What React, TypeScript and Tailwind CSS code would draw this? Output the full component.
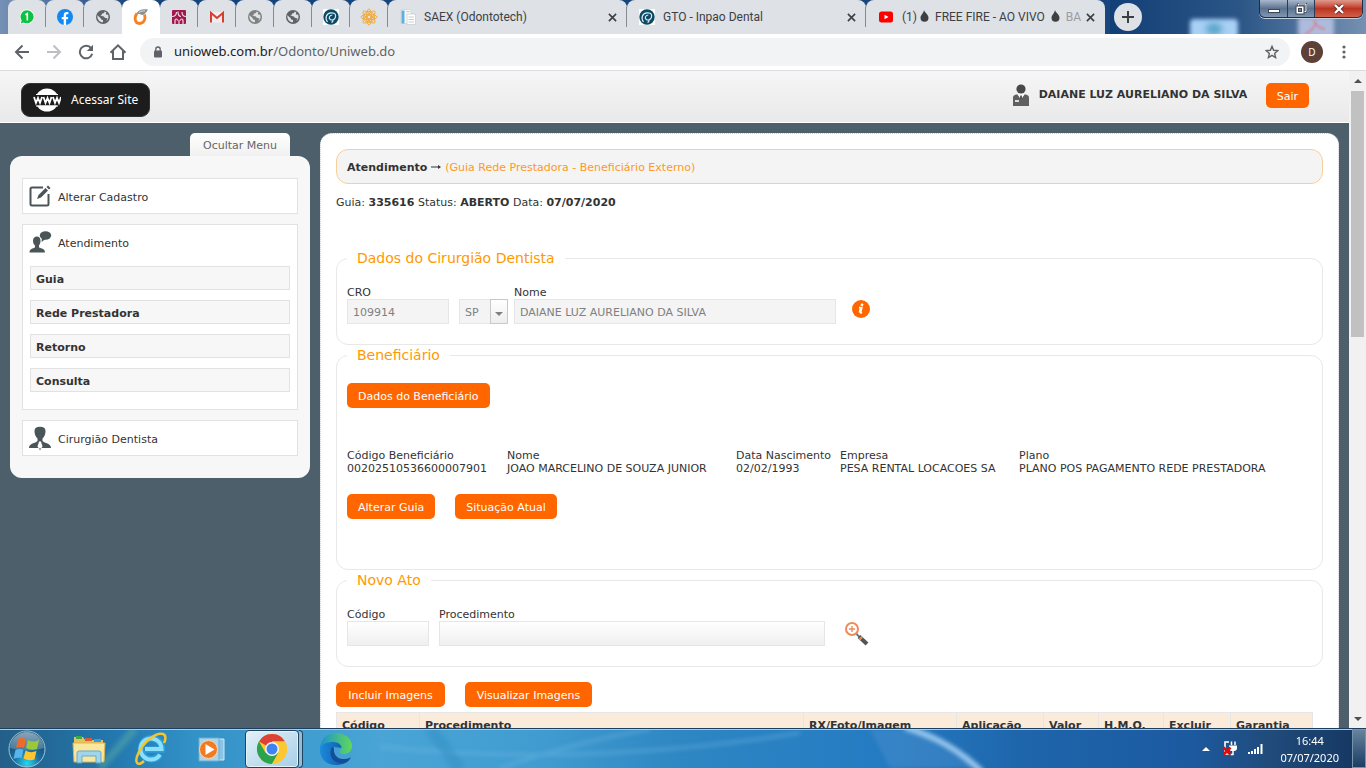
import type { ReactNode } from "react";

const ui = "font-['Noto_Sans',sans-serif]";

function Globe({ tone = "#5f6368" }: { tone?: string }) {
  return (
    <svg width="16" height="16" viewBox="0 0 16 16">
      <circle cx="8" cy="8" r="7" fill={tone} />
      <path d="M2.3 6.2 L5.5 9 L6.3 10.6 L8 11 V13.2 C5 13.4 2.2 11 2.3 6.2Z M9.5 2.6 C9.5 4 8.5 4.6 7 4.4 L6.5 6.2 L5 6.6 L8.8 7.4 L9.8 8.8 L12.6 9.4 L11.2 12.2 C13.6 10.4 14 7.6 13 5.4 L11.5 5.8 L10.8 4.8 L11.4 3.4Z" fill="#dee1e6" />
    </svg>
  );
}

function WhatsApp() {
  return (
    <svg width="16" height="16" viewBox="0 0 16 16">
      <path d="M8.2 0.5a7.3 7.3 0 1 1-3.5 13.8L.6 15.6l1.3-4A7.3 7.3 0 0 1 8.2.5Z" fill="#fff" />
      <path d="M8.2 1.3a6.5 6.5 0 1 1-3.4 12.1L1.7 14.500l1-3A6.500 6.500 0 0 1 8.200 1.300Z" fill="#0dc143" />
      <path d="M6.4 5.7 8.300 4.700V11.500" fill="none" stroke="#fff" strokeWidth="1.600" />
    </svg>
  );
}

function Facebook() {
  return (
    <svg width="16" height="16" viewBox="0 0 16 16">
      <circle cx="8" cy="8" r="8" fill="#1188f2" />
      <path d="M6.7 16V10.300H4.700V8H6.700V6.300C6.700 4.200 7.900 3.100 9.700 3.100c.9 0 1.700.1 1.700.1v2h-1c-1 0-1.300.6-1.300 1.200V8h2.200l-.4 2.300H9.100V16Z" fill="#fff" />
    </svg>
  );
}

function OrangeRing() {
  return (
    <svg width="16" height="18" viewBox="0 0 16 18">
      <path d="M4 5.500C1 9 1.500 15.500 6.500 15.500c4.500 0 6.500-4.500 5-9" fill="none" stroke="#f58220" strokeWidth="2.800" />
      <path d="M3 6C5 2 9 .5 15 1.500c-1 2-2 3-3.500 4.500C9 8.500 7 5 3 6Z" fill="#8f8f8f" />
      <path d="M6 4.500c2-1.500 4-1.700 6-1.600" stroke="#e4e4e4" fill="none" />
    </svg>
  );
}

function Crimson() {
  return (
    <svg width="16" height="16" viewBox="0 0 16 16">
      <rect x="1" y="1" width="14" height="14" rx="1" fill="#a3174f" />
      <g stroke="#ecd9e2" fill="none" strokeWidth="1.200">
        <path d="M1 7.500C4 7.500 5.500 6 5.500 3M7 2.500C7 5 8 7.500 10 7.500M11 3c0 2.500 1 4.500 4 4.500" />
        <path d="M4 15v-3.500c0-2 2.500-2 2.500 0M9.500 11.500c0-2 2.500-2 2.500 0V15M8 11v4" />
      </g>
    </svg>
  );
}

function Gmail() {
  return (
    <svg width="16" height="16" viewBox="0 0 16 16">
      <path d="M1 3h14v10.500H1Z" fill="#f2eded" />
      <path d="M2 13.500V4l6 5 6-5v9.500" fill="none" stroke="#d93d30" strokeWidth="2" />
    </svg>
  );
}

function Inpao() {
  return (
    <svg width="16" height="16" viewBox="0 0 16 16">
      <rect width="16" height="16" fill="#fff" />
      <circle cx="8" cy="8" r="7.700" fill="#0b4a66" />
      <path d="M4.500 13C1.500 9 3.500 4 8 3.800c5-.3 5 2.700 4.300 4.700-1 2.500-3.500 3-5 2-2-1.500-1-4 2-4.500M9.500 10.500c1 1 .2 2.500-1 3" fill="none" stroke="#dcebf0" strokeWidth="1.200" />
    </svg>
  );
}

function Mandala() {
  return (
    <svg width="18" height="18" viewBox="0 0 18 18" fill="none" stroke="#f2ac3c" strokeWidth="1">
      <circle cx="9" cy="9" r="1.800" />
      {[0, 45, 90, 135].map((a) => (
        <ellipse key={a} cx="9" cy="9" rx="8" ry="2.600" transform={`rotate(${a} 9 9)`} />
      ))}
      <circle cx="9" cy="9" r="5.500" />
    </svg>
  );
}

function Pages() {
  return (
    <svg width="16" height="16" viewBox="0 0 16 16">
      <path d="M1 .5h10v14H1Z" fill="#f7f9fa" stroke="#c8cdd2" strokeWidth=".6" />
      <path d="M1.500 1.500h3v13h-3Z" fill="#61b0da" />
      <path d="M7 5h8.500v10.500H7Z" fill="#fff" stroke="#c4c9ce" strokeWidth=".7" />
      <path d="M8.500 8h5.500M8.500 10.500h5.500M8.500 13h5.500M6 2.500h4" stroke="#c9ced3" />
    </svg>
  );
}

function YouTube() {
  return (
    <svg width="16" height="16" viewBox="0 0 16 16">
      <rect x="1" y="2.500" width="14" height="11" rx="2.500" fill="#f00" />
      <path d="m6.500 5.700 4 2.300-4 2.300Z" fill="#fff" />
    </svg>
  );
}

function Drop() {
  return (
    <svg width="9" height="12" viewBox="0 0 9 12" className="mx-[3px] inline-block align-[-1px]">
      <path d="M4 0C4.500 2.500 8.500 4.500 8.500 7.800A4 4 0 0 1 .5 7.800C.5 5 3.500 3.500 4 0Z" fill="#3c4043" />
    </svg>
  );
}

const pinned = [
  { name: "WhatsApp", icon: <WhatsApp /> },
  { name: "Facebook", icon: <Facebook /> },
  { name: "Site", icon: <Globe /> },
  { name: "Uniodonto", icon: <OrangeRing />, active: true },
  { name: "Metlife", icon: <Crimson /> },
  { name: "Gmail", icon: <Gmail /> },
  { name: "Site", icon: <Globe tone="#808080" /> },
  { name: "Site", icon: <Globe /> },
  { name: "Inpao", icon: <Inpao /> },
  { name: "Mandala", icon: <Mandala /> },
];

function WideTab({ icon, last, children }: { icon: ReactNode; last?: boolean; children: ReactNode }) {
  return (
    <div className="flex h-[34px] w-[239px] items-center rounded-t-lg bg-[#dee1e6] pl-3">
      {icon}
      <span className="ml-2 w-[180px] overflow-hidden font-['Roboto',sans-serif] text-xs whitespace-nowrap text-[#3c4043]">{children}</span>
      <button aria-label="Fechar guia" className="flex size-4 items-center justify-center">
        <svg width="9" height="9" viewBox="0 0 10 10" stroke="#3c4043" strokeWidth="1.800">
          <path d="m1 1 8 8M9 1 1 9" />
        </svg>
      </button>
      <span className={`ml-auto h-5 w-px ${last ? "" : "bg-[#868b90]"}`} />
    </div>
  );
}

function TabStrip() {
  return (
    <div className={`relative flex h-[34px] shrink-0 bg-linear-to-r from-[#7690b5] via-[#14427c] via-10% to-[#1b477c] ${ui}`}>
      <div className="absolute inset-y-0 right-0 w-64 overflow-hidden bg-linear-to-r from-[#123f77] via-[#2a5586] to-[#7590b1]">
        <div className="absolute top-[19px] left-20 h-5 w-12 rounded-sm bg-[#a9d0f5] blur-[2px]" />
        <div className="absolute top-[19px] left-24 h-3 w-4 translate-y-1 rounded-full bg-[#5aa6cb] blur-[3px]" />
        <div className="absolute top-[17px] right-8 h-5 w-9 bg-[#aebbdc] blur-[2px]" />
        <svg className="absolute right-10 bottom-0 blur-[1px]" width="22" height="14" viewBox="0 0 22 14" fill="none" stroke="#d08a9c" strokeWidth="2">
          <path d="M10 0c2 5 4 8 11 9M12 2C10 8 6 12 1 14" />
        </svg>
      </div>
      <div className="relative flex pl-2">
        {pinned.map((t, i) => (
          <button
            key={i}
            aria-label={t.name}
            className={`flex h-[34px] w-[38px] items-center justify-center rounded-t-lg ${t.active ? "bg-white" : "bg-[#dee1e6]"}`}
          >
            <span className="flex flex-1 justify-center">{t.icon}</span>
            <span className={`h-5 w-px ${t.active || i === 2 ? "" : "bg-[#868b90]"}`} />
          </button>
        ))}
        <WideTab icon={<Pages />}>SAEX (Odontotech)</WideTab>
        <WideTab icon={<Inpao />}>GTO - Inpao Dental</WideTab>
        <WideTab icon={<YouTube />} last>
          (1)<Drop /> FREE FIRE - AO VIVO <Drop /> <span className="text-[#9a9da1]">BA</span>
        </WideTab>
      </div>
      <button aria-label="Nova guia" className="relative mt-[3px] ml-[9px] flex size-7 items-center justify-center rounded-full bg-[#dee1e6]">
        <svg width="12" height="12" viewBox="0 0 12 12" stroke="#3c4043" strokeWidth="2">
          <path d="M6 0v12M0 6h12" />
        </svg>
      </button>
      <div className="absolute top-0 right-[3px] flex h-[18px] overflow-hidden rounded-b-md border border-t-0 border-[#1e2d42] shadow-[0_1px_0_#c3d0df]">
        <button aria-label="Minimizar" className="flex w-7 items-end justify-center border-r border-[#2b3b52] bg-linear-to-b from-[#a9b9cc] via-[#5c7390] via-50% to-[#8097b2] pb-1">
          <span className="h-1 w-3 border border-[#3a4556] bg-white" />
        </button>
        <button aria-label="Restaurar" className="flex w-[27px] items-center justify-center border-r border-[#2b3b52] bg-linear-to-b from-[#a9b9cc] via-[#5c7390] via-50% to-[#8097b2]">
          <svg width="12" height="12" viewBox="0 0 12 12" fill="none">
            <path d="M3.500 3V1h7.500v7.500H9" stroke="#3a4556" strokeWidth="2" />
            <path d="M3.500 3V1h7.500v7.500H9" stroke="#fff" />
            <rect x="1" y="3" width="8" height="8" fill="#fff" stroke="#3a4556" />
            <rect x="3.500" y="5.500" width="3" height="3" fill="#72849b" stroke="#3a4556" />
          </svg>
        </button>
        <button aria-label="Fechar" className="flex w-[47px] items-center justify-center bg-linear-to-b from-[#e09a8c] via-[#bb3320] via-50% to-[#d2604a]">
          <svg width="12" height="10" viewBox="0 0 12 10">
            <path d="m2 1 8 8M10 1 2 9" stroke="#5c2a26" strokeWidth="4" />
            <path d="m2 1 8 8M10 1 2 9" stroke="#fff" strokeWidth="2.400" />
          </svg>
        </button>
      </div>
    </div>
  );
}

function Toolbar() {
  return (
    <div className={`flex h-[37px] shrink-0 items-center border-b border-[#dadce0] bg-white pr-4 pl-3 ${ui}`}>
      <div className="flex items-center gap-3">
        <button aria-label="Voltar" className="flex size-5 items-center justify-center">
          <svg width="16" height="16" viewBox="0 0 16 16" fill="none" stroke="#5f6368" strokeWidth="2"><path d="M15 8H2.500M8.500 1.500 2 8l6.500 6.500" /></svg>
        </button>
        <button aria-label="Avançar" className="flex size-5 items-center justify-center">
          <svg width="16" height="16" viewBox="0 0 16 16" fill="none" stroke="#bdbfc2" strokeWidth="2"><path d="M1 8h12.500M7.500 1.500 14 8l-6.500 6.500" /></svg>
        </button>
        <button aria-label="Recarregar" className="flex size-5 items-center justify-center">
          <svg width="16" height="16" viewBox="0 0 16 16"><path d="M13.200 4.200A6.300 6.300 0 1 0 14.200 9.800" fill="none" stroke="#5f6368" strokeWidth="2" /><path d="M15 .8V7H8.800Z" fill="#5f6368" /></svg>
        </button>
        <button aria-label="Página inicial" className="flex size-5 items-center justify-center">
          <svg width="18" height="18" viewBox="0 0 18 18" fill="none" stroke="#5f6368" strokeWidth="2"><path d="M1.500 9.800 9 2.300l7.500 7.500M4 8v8h3.500H14V8" /></svg>
        </button>
      </div>
      <div className="ml-3 flex h-7 flex-1 items-center rounded-full bg-[#f1f3f4] pr-[11px] pl-[14px]">
        <svg width="8" height="12" viewBox="0 0 8 12"><path d="M1.800 5V3.200a2.200 2.200 0 0 1 4.400 0V5" fill="none" stroke="#5f6368" strokeWidth="1.300" /><rect y="4.500" width="8" height="7" rx="1" fill="#5f6368" /></svg>
        <span className="ml-3 flex-1 text-[13px] text-[#5f6368]"><span className="text-[#202124]">unioweb.com.br</span>/Odonto/Uniweb.do</span>
        <button aria-label="Favoritar">
          <svg width="14" height="14" viewBox="0 0 14 14" fill="none" stroke="#5f6368" strokeWidth="1.400"><path d="m7 1.300 1.600 4 4.300.3-3.300 2.800 1 4.200L7 10.300l-3.600 2.300 1-4.200L1.100 5.600l4.300-.3Z" /></svg>
        </button>
      </div>
      <button className="ml-[11px] flex size-[22px] items-center justify-center rounded-full bg-[#5d4037] text-[10px] text-white">D</button>
      <button aria-label="Menu" className="ml-[15px] flex w-3 justify-center">
        <svg width="4" height="14" viewBox="0 0 4 14" fill="#5f6368"><circle cx="2" cy="2" r="1.600" /><circle cx="2" cy="7" r="1.600" /><circle cx="2" cy="12" r="1.600" /></svg>
      </button>
    </div>
  );
}

function Btn({ children, className = "" }: { children: ReactNode; className?: string }) {
  return <button className={`h-[25px] rounded-[5px] bg-[#ff6600] px-[11px] pt-px text-[11px] whitespace-nowrap text-white ${className}`}>{children}</button>;
}

function SiteHeader() {
  return (
    <header className="flex h-[52px] items-start justify-between border-b border-white bg-linear-to-b from-[#f6f6f6] to-[#e9e9e9] pt-3 pr-10 pl-[21px]">
      <a href="#site" className={`flex h-[34px] items-center rounded-[9px] border border-[#333] bg-[#1c1c1c] pr-[11px] pl-[11px] text-xs text-white ${ui}`}>
        <svg width="28" height="24" viewBox="0 0 28 24">
          <circle cx="14" cy="12" r="11.500" fill="#fff" />
          <rect y="7" width="28" height="10.500" fill="#1c1c1c" />
          <path d="m1 9 2 6 2-5 2 5 2-6m1.500 0 2 6 2-5 2 5 2-6m1.500 0 2 6 2-5 2 5 2-6" fill="none" stroke="#fff" strokeWidth="1.800" />
          <path d="M3 6.500h22M3 18h22" stroke="#fff" />
        </svg>
        <span className="ml-[10px]">Acessar Site</span>
      </a>
      <div className="flex items-start">
        <svg width="18" height="22" viewBox="0 0 18 22" className="mt-px">
          <circle cx="9" cy="5" r="4.600" fill="#484848" />
          <path d="M1 22v-8.500C1 11 4 10.500 5.500 10.500L9 15l3.500-4.500c1.500 0 4.500.5 4.500 3V22Z" fill="#606060" />
          <path d="m6 10.500 3 5.500 3-5.500" fill="#fff" />
          <path d="M8.200 11.500h1.600L10.300 15 9 16.500 7.700 15Z" fill="#555" />
          <path d="M3 16h4v2H3Z" fill="#ddd" />
        </svg>
        <strong className="mt-[5px] mr-[10px] ml-[9px] min-w-[217px] text-[11px] leading-[14px]">DAIANE LUZ AURELIANO DA SILVA</strong>
        <Btn>Sair</Btn>
      </div>
    </header>
  );
}

function MenuTitle({ icon, children }: { icon: ReactNode; children: ReactNode }) {
  return (
    <a href="#menu" className="flex h-[34px] items-center gap-[6px] pl-[5px]">
      <span className="flex w-6 justify-center">{icon}</span>
      <span className="pt-[2px]">{children}</span>
    </a>
  );
}

function Sidebar() {
  return (
    <aside className="w-[300px] shrink-0">
      <div className="flex justify-end pr-5">
        <button className="h-[23px] w-[100px] rounded-t-[5px] bg-linear-to-b from-white to-[#f0f0f0] pt-px text-[11px] text-[#666]">Ocultar Menu</button>
      </div>
      <nav className="flex flex-col gap-[10px] rounded-xl bg-[#f7f7f7] px-3 py-[22px]">
        <div className="border border-[#e2e2e2] bg-white">
          <MenuTitle
            icon={
              <svg width="24" height="24" viewBox="0 0 24 24">
                <path d="M15 3.500H4Q2.500 3.500 2.500 5v15Q2.500 21.500 4 21.500h15q1.500 0 1.500-1.500V10" fill="none" stroke="#4a5558" strokeWidth="2" />
                <path d="m9 15 1.500-4L17.500 4 20 6.500l-7 7ZM18.500 3 20 1.500 22.500 4 21 5.500Z" fill="#4a5558" />
              </svg>
            }
          >
            Alterar Cadastro
          </MenuTitle>
        </div>
        <div className="border border-[#e2e2e2] bg-white px-[7px] pb-[17px]">
          <div className="-ml-[7px]">
            <MenuTitle
              icon={
                <svg width="24" height="24" viewBox="0 0 24 24" fill="#4a5558">
                  <ellipse cx="17.500" cy="5.500" rx="5.700" ry="4.200" />
                  <path d="m14 8-.5 4 4-3ZM5 11c0-3 1.500-4.500 4-4.500s3.500 2 3.500 4.500c0 2-1 3.500-1.500 4.500v2c2.500 1 6 1.200 6 5H1.500c0-3.800 3.500-4 5.500-5v-2C6 14.500 5 13 5 11Z" />
                </svg>
              }
            >
              Atendimento
            </MenuTitle>
          </div>
          <ul className="mt-[7px] flex flex-col gap-[10px] font-bold">
            {["Guia", "Rede Prestadora", "Retorno", "Consulta"].map((t) => (
              <li key={t} className="border border-[#e2e2e2] bg-[#f7f7f7]">
                <a href="#item" className="flex h-[22px] items-center px-[5px] pt-[3px]">{t}</a>
              </li>
            ))}
          </ul>
        </div>
        <div className="border border-[#e2e2e2] bg-white">
          <MenuTitle
            icon={
              <svg width="24" height="24" viewBox="0 0 24 24">
                <path d="M6.500 5c0-3 2-4.300 5.500-4.300S17.500 2 17.500 5c0 3-1 5.500-3 7.500V15c2 2.500 8.500 2 8.500 7H1c0-5 6.500-4.500 8.500-7v-2.500C7.500 10.500 6.500 8 6.500 5Z" fill="#4a5558" />
                <path d="M11 15.500h2l1.500 5-2.500 3.500-2.500-3.500Z" fill="#fff" />
                <path d="m10.500 22.500 1.500 1.500 1.500-1.500" fill="#4a5558" />
              </svg>
            }
          >
            Cirurgião Dentista
          </MenuTitle>
        </div>
      </nav>
    </aside>
  );
}

function Section({ title, children, className = "pb-5" }: { title: string; children: ReactNode; className?: string }) {
  return (
    <fieldset className={`rounded-xl border border-[#e8e8e8] px-[10px] pt-5 ${className}`}>
      <legend className="px-[10px] text-sm leading-4 text-[#ff9900]">{title}</legend>
      {children}
    </fieldset>
  );
}

const patient = [
  { label: "Código Beneficiário", value: "00202510536600007901", w: "w-[160px]" },
  { label: "Nome", value: "JOAO MARCELINO DE SOUZA JUNIOR", w: "w-[229px]" },
  { label: "Data Nascimento", value: "02/02/1993", w: "w-[104px]" },
  { label: "Empresa", value: "PESA RENTAL LOCACOES SA", w: "w-[179px]" },
  { label: "Plano", value: "PLANO POS PAGAMENTO REDE PRESTADORA", w: "flex-1" },
];

const columns = [
  { t: "Código", w: "w-[83px]" },
  { t: "Procedimento", w: "w-[384px]" },
  { t: "RX/Foto/Imagem", w: "w-[153px]" },
  { t: "Aplicação", w: "w-[87px]" },
  { t: "Valor", w: "w-[55px]" },
  { t: "H.M.O.", w: "w-[65px]" },
  { t: "Excluir", w: "w-[67px]" },
  { t: "Garantia", w: "w-[82px]" },
];

const disabled = "h-[25px] border border-[#e6e6e6] bg-[#f4f4f4] px-[5px] pt-px text-[#808080]";
const field = "h-[25px] border border-[#e6e6e6] bg-linear-to-b from-white to-[#efefef] px-[5px]";

function Content() {
  return (
    <main className="min-w-0 flex-1 rounded-t-xl border border-b-0 border-dotted border-[#c9ced2] bg-white px-[15px] pt-[15px]">
      <div className="flex h-[35px] items-center gap-1 rounded-xl border border-[#f6cf9b] bg-[#f4f4f4] px-[10px] pt-px">
        <strong>Atendimento</strong>
        <svg width="10" height="6" viewBox="0 0 10 6"><path d="M0 3h8" stroke="#333" /><path d="m7 1 3 2-3 2Z" fill="#333" /></svg>
        <span className="text-[#ff9922]">(Guia Rede Prestadora - Beneficiário Externo)</span>
      </div>
      <p className="mt-3 mb-[41px]">
        Guia: <b>335616</b> Status: <b>ABERTO</b> Data: <b>07/07/2020</b>
      </p>
      <div className="flex flex-col gap-[2px]">
        <Section title="Dados do Cirurgião Dentista">
          <div className="flex items-end">
            <div className="flex flex-col">
              <label htmlFor="cro">CRO</label>
              <input id="cro" disabled defaultValue="109914" className={`w-[102px] ${disabled}`} />
            </div>
            <div className="relative ml-[10px]">
              <select aria-label="UF" disabled defaultValue="SP" className={`w-[49px] appearance-none opacity-100 ${disabled} block`}>
                <option>SP</option>
              </select>
              <span className="pointer-events-none absolute inset-y-0 right-0 flex w-[18px] items-center justify-center border border-[#c9c9c9] bg-linear-to-b from-white to-[#eee]">
                <svg width="8" height="4" viewBox="0 0 8 4" className="mt-1"><path d="M0 0h8L4 4Z" fill="#808080" /></svg>
              </span>
            </div>
            <div className="ml-[6px] flex flex-col">
              <label htmlFor="nome">Nome</label>
              <input id="nome" disabled defaultValue="DAIANE LUZ AURELIANO DA SILVA" className={`w-[322px] ${disabled}`} />
            </div>
            <button aria-label="Informações" className="mb-[6px] ml-4">
              <svg width="18" height="18" viewBox="0 0 18 18">
                <circle cx="9" cy="9" r="9" fill="#ff6600" />
                <circle cx="10" cy="4.800" r="1.400" fill="#fff" />
                <path d="M7 7.500h3L8.700 12.500c-.2.700.3.700 1.400 0M7 7.500l1.500.5-1.200 4.500" fill="none" stroke="#fff" strokeWidth="1.400" />
              </svg>
            </button>
          </div>
        </Section>
        <Section title="Beneficiário" className="pb-[50px]">
          <Btn>Dados do Beneficiário</Btn>
          <dl className="mt-[41px] mb-[19px] flex whitespace-nowrap">
            {patient.map((p) => (
              <div key={p.label} className={p.w}>
                <dt>{p.label}</dt>
                <dd>{p.value}</dd>
              </div>
            ))}
          </dl>
          <div className="flex gap-5">
            <Btn>Alterar Guia</Btn>
            <Btn>Situação Atual</Btn>
          </div>
        </Section>
        <Section title="Novo Ato">
          <div className="flex items-end">
            <div className="flex flex-col">
              <label htmlFor="codigo">Código</label>
              <input id="codigo" className={`w-[82px] ${field}`} />
            </div>
            <div className="ml-[10px] flex flex-col">
              <label htmlFor="proc">Procedimento</label>
              <input id="proc" className={`w-[386px] ${field}`} />
            </div>
            <button aria-label="Pesquisar" className="ml-5">
              <svg width="24" height="25" viewBox="0 0 24 25" fill="none">
                <circle cx="7" cy="8" r="6" stroke="#f08a58" strokeWidth="2" />
                <path d="M7 5v6M4 8h6" stroke="#f08a58" strokeWidth="1.400" />
                <path d="m11.500 13 3 3" stroke="#777" strokeWidth="2" />
                <path d="m14 15.500 8 7.500" stroke="#555" strokeWidth="4" />
                <path d="m15 16.500 1.500 1.500" stroke="#f08a58" strokeWidth="4" />
              </svg>
            </button>
          </div>
        </Section>
      </div>
      <div className="mt-[15px] flex gap-5">
        <Btn className="min-w-[109px]">Incluir Imagens</Btn>
        <Btn className="min-w-[127px]">Visualizar Imagens</Btn>
      </div>
      <table className="mt-[5px] table-fixed border-collapse">
        <thead>
          <tr>
            {columns.map((c) => (
              <th key={c.t} className={`h-[25px] border border-[#e6e6e6] bg-[#faebdb] px-[5px] text-left ${c.w}`}>{c.t}</th>
            ))}
          </tr>
        </thead>
      </table>
    </main>
  );
}

function Taskbar() {
  return (
    <footer className={`relative flex h-10 shrink-0 items-center overflow-hidden border-t border-[#1d3f5f] bg-[#2a82b9] ${ui}`}>
      <svg className="absolute inset-0 size-full" viewBox="0 0 1366 40" preserveAspectRatio="none">
        <defs>
          <linearGradient id="bar">
            <stop offset="0" stopColor="#235f88" /><stop offset=".08" stopColor="#2277ad" /><stop offset=".14" stopColor="#3291c6" /><stop offset=".28" stopColor="#4aa5d6" />
            <stop offset=".4" stopColor="#409bd0" /><stop offset=".5" stopColor="#2e86c2" /><stop offset=".65" stopColor="#257bc2" /><stop offset=".75" stopColor="#1e65ab" />
            <stop offset=".87" stopColor="#1c5aa0" /><stop offset=".93" stopColor="#204b7b" /><stop offset="1" stopColor="#14365f" />
          </linearGradient>
          <filter id="soft" x="-20%" y="-20%" width="140%" height="140%"><feGaussianBlur stdDeviation="2" /></filter>
        </defs>
        <rect width="1366" height="40" fill="url(#bar)" />
        <g filter="url(#soft)" fill="none">
          <path d="M870 0h40l65 40h-85Z" fill="#4e94d0" opacity=".4" />
          <path d="M905 -2Q950 12 982 44" stroke="#9ccaf0" strokeWidth="6" />
          <path d="M500 40Q580 12 650 0M380 18Q580 40 800 4" stroke="#6fb6e2" strokeWidth="4" opacity=".4" />
          <path d="M100 40 135 0" stroke="#6fc0a0" strokeWidth="8" opacity=".35" />
          <path d="M430 0 460 40" stroke="#2586ba" strokeWidth="12" opacity=".35" />
        </g>
        <path d="M0 .5h1366" stroke="#a7cce4" />
      </svg>
      <div className="relative flex h-full items-center">
        <button aria-label="Iniciar" className="ml-2">
          <svg width="38" height="38" viewBox="0 0 38 38">
            <defs>
              <radialGradient id="orb" cx=".5" cy=".9" r=".9"><stop offset="0" stopColor="#27d7f2" /><stop offset=".4" stopColor="#1b6e9f" /><stop offset="1" stopColor="#173e60" /></radialGradient>
              <linearGradient id="gloss" x2="0" y2="1"><stop stopColor="#d6e6ef" /><stop offset="1" stopColor="#5d87a3" /></linearGradient>
            </defs>
            <circle cx="19" cy="19" r="18" fill="url(#orb)" stroke="#9fc6da" />
            <path d="M2 18a17 16 0 0 1 34 0q-17 5-34 0Z" fill="url(#gloss)" opacity=".6" />
            <path d="M10 9q4-2 8 0l-2 9q-4-2-8 0Z" fill="#ee6a2b" />
            <path d="M20 10q5 3 11 0l-2 9q-6 2-11-1Z" fill="#9ac83c" />
            <path d="M7.500 20q4-2 8 0l-2 8q-4-1-8 1Z" fill="#5ab4ec" />
            <path d="M17.500 20.500q5 3 11 .5l-2 8.500q-6 2-11-1Z" fill="#fcc62c" />
          </svg>
        </button>
        <button aria-label="Explorador de Arquivos" className="ml-[26px]">
          <svg width="34" height="30" viewBox="0 0 34 30">
            <path d="M2 3h9l2 3h18v20H2Z" fill="#e9c25d" />
            <path d="M4 2h6v3H4Z" fill="#3bab47" /><path d="M13 4h7v3h-7Z" fill="#d95b33" /><path d="M22 5h7v3h-7Z" fill="#399bd8" />
            <path d="M1 9h32l-1 19H2Z" fill="#f9e7a0" stroke="#dab451" />
            <path d="M5 29V19q0-2 2-2h20q2 0 2 2v10h-5v-7H10v7Z" fill="#9dd6ef" stroke="#5fa7cc" opacity=".95" />
          </svg>
        </button>
        <button aria-label="Internet Explorer" className="ml-7">
          <svg width="34" height="34" viewBox="0 0 34 34">
            <path d="M26 23A10.500 10.500 0 1 1 28 17.500H11" fill="none" stroke="#2e9fdc" strokeWidth="6.500" />
            <path d="M26 22.500A10.500 10.500 0 1 1 27.500 17H11" fill="none" stroke="#8be0fb" strokeWidth="4" />
            <path d="M10 29C4 35 0 31 4 22 9 10 22 0 29 2c3 1 3 5 1 9" fill="none" stroke="#f5c52d" strokeWidth="2.500" />
          </svg>
        </button>
        <button aria-label="Windows Media Player" className="ml-[30px]">
          <svg width="30" height="28" viewBox="0 0 30 28">
            <path d="M8 4h18v21H8Z" fill="#8cc3e5" stroke="#cfe9f8" /><path d="M1 3h20v23H1Z" fill="#a8d4ec" stroke="#6eadd1" />
            <circle cx="10.500" cy="14.500" r="9" fill="#f27a22" stroke="#ffd3a1" /><path d="m7.500 9 9 5.500-9 5.500Z" fill="#fff" />
          </svg>
        </button>
        <button aria-label="Google Chrome" className="ml-[17px] flex h-[38px] w-[54px] items-center justify-center rounded-sm border border-[#23435d] bg-linear-to-br from-[#e2f1f9] to-[#a6cee7] shadow-[inset_0_0_0_1px_#e5f4fb]">
          <svg width="30" height="30" viewBox="0 0 30 30">
            <circle cx="15" cy="15" r="15" fill="#fbc832" />
            <path d="M15 15 2 7.500A15 15 0 0 1 28 7.500H15Z" fill="#dc4336" />
            <path d="M2 7.500A15 15 0 0 0 15 30l6.500-11.300L15 15 8.500 18.700Z" fill="#2ba24c" />
            <path d="M15 7.500h13A15 15 0 0 1 15 30l6.500-11.300Z" fill="#fbc832" />
            <circle cx="15" cy="15" r="7" fill="#f4f4f4" /><circle cx="15" cy="15" r="5.500" fill="#3f82f1" />
          </svg>
        </button>
        <span className="h-[38px] w-1 rounded-r-sm border border-l-0 border-[#23435d] bg-[#8dbfdd]" />
        <button aria-label="Microsoft Edge" className="ml-[17px]">
          <svg width="32" height="32" viewBox="0 0 32 32">
            <defs>
              <linearGradient id="edge"><stop stopColor="#1c91d3" /><stop offset="1" stopColor="#60d957" /></linearGradient>
              <linearGradient id="edgeLow"><stop stopColor="#1b8ade" /><stop offset="1" stopColor="#0f4f9c" /></linearGradient>
            </defs>
            <path d="M0 17C0 9 6 6 12 6c7 0 11 4 10 9l-8-1c-3 6 2 13 9 13 3 0 5-1 7-2-3 5-8 7-14 7C7 32 0 26 0 17Z" fill="url(#edgeLow)" />
            <path d="M0 15C1 5 8 0 16 0c10 0 16 7 16 13 0 5-4 8-8 8-3 0-6-1-4-3 4-5-1-9-7-9C7 9 2 11 0 15Z" fill="url(#edge)" />
            <path d="M12 14c-4 7 0 18 13 16 3-1 5-4 6-6-3 2-5 2-8 2-6 0-10-5-9-11Z" fill="#124f9b" />
          </svg>
        </button>
      </div>
      <div className="relative ml-auto flex h-full items-center text-white">
        <svg width="8" height="4" viewBox="0 0 8 4"><path d="m0 4 4-4 4 4Z" fill="#fff" /></svg>
        <svg width="16" height="17" viewBox="0 0 16 17" className="ml-[12px]" fill="none">
          <path d="M7 2H3v12h4" stroke="#fff" strokeWidth="1.600" />
          <path d="M7 5.500h8V8q0 3-3 3h-2q-3 0-3-3Z" fill="#fff" />
          <path d="M9.500 5V1.500m3.500 3.500V1.500M11 10v4.500H8.500" stroke="#fff" strokeWidth="1.500" />
          <path d="m1.500 7.500 7 7M8.500 7.500l-7 7" stroke="#e00b0b" strokeWidth="2.600" />
        </svg>
        <svg width="16" height="12" viewBox="0 0 16 12" className="ml-[10px]" fill="#fff"><path d="M0 9h2v2H0ZM3 8h2v3H3ZM6 6h2v5H6ZM9 4h2v7H9ZM12.500 1h2v10h-2Z" /></svg>
        <div className="mr-[13px] ml-[16px] text-center text-[11px] leading-[17px]">
          <div>16:44</div>
          <div>07/07/2020</div>
        </div>
        <button aria-label="Mostrar área de trabalho" className="h-full w-[14px] border border-[#7893ae] bg-linear-to-b from-[#68839d] to-[#1b3e63]" />
      </div>
    </footer>
  );
}

function Scrollbar() {
  return (
    <div className="flex w-[17px] shrink-0 flex-col items-center bg-[#f1f1f1]">
      <svg width="8" height="4" viewBox="0 0 8 4" className="my-2"><path d="m0 4 4-4 4 4Z" fill="#505050" /></svg>
      <div className="h-[246px] w-[13px] bg-[#c1c1c1]" />
      <svg width="8" height="4" viewBox="0 0 8 4" className="mt-auto mb-[7px]"><path d="M0 0h8L4 4Z" fill="#505050" /></svg>
    </div>
  );
}

export default function App() {
  return (
    <div className="flex h-screen flex-col overflow-hidden">
      <TabStrip />
      <Toolbar />
      <div className="flex min-h-0 flex-1">
        <div className="min-w-0 flex-1 overflow-hidden bg-[#4c5f6b] font-['DejaVu_Sans',sans-serif] text-[11px] leading-[13px] text-[#333]">
          <SiteHeader />
          <div className="flex min-h-full items-start gap-[10px] px-[10px] pt-[10px]">
            <Sidebar />
            <Content />
          </div>
        </div>
        <Scrollbar />
      </div>
      <Taskbar />
    </div>
  );
}
